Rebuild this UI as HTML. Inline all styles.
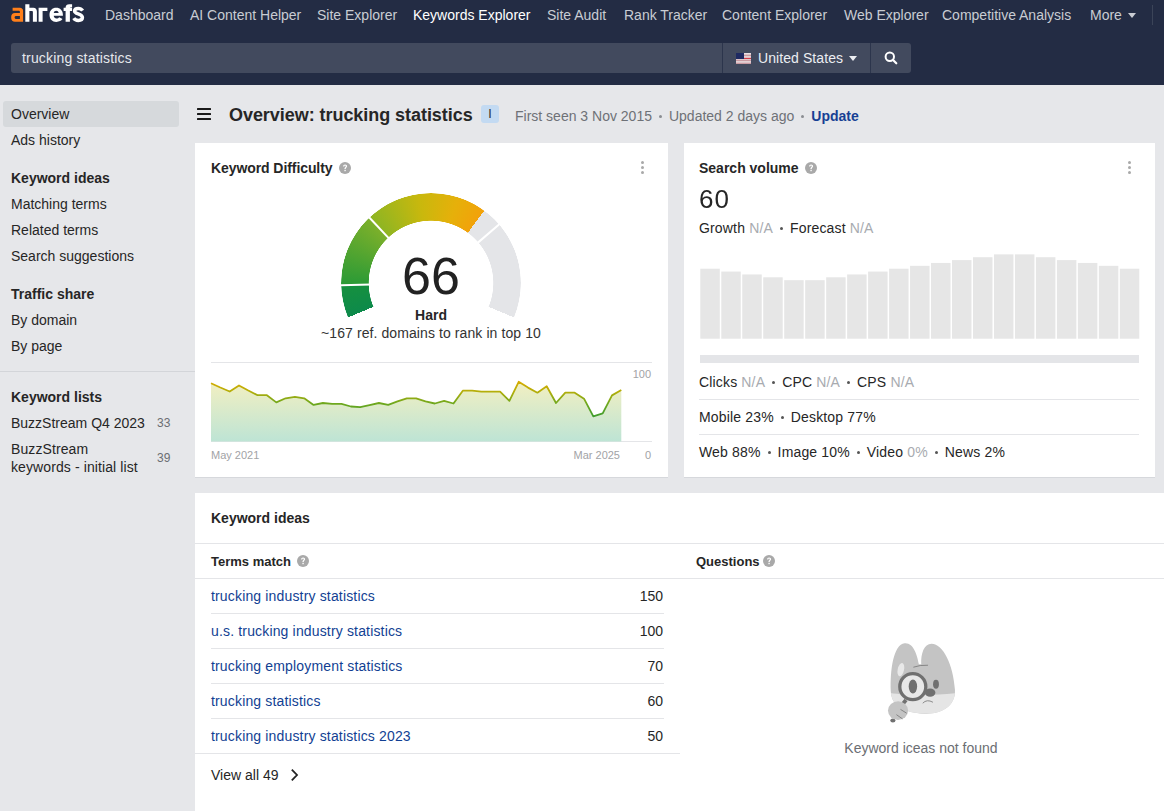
<!DOCTYPE html>
<html><head><meta charset="utf-8">
<style>
*{box-sizing:border-box;margin:0;padding:0}
html,body{width:1164px;height:811px;overflow:hidden;background:#e6e7ea;font-family:"Liberation Sans",sans-serif;color:#262626;font-size:14px}
.a{position:absolute;white-space:nowrap;line-height:20px}
#nav{position:absolute;left:0;top:0;width:1164px;height:85px;background:#232c44}
.ni{position:absolute;top:5px;color:#c9ccd3;font-size:14px;line-height:20px}
.b{font-weight:bold}
.card{position:absolute;background:#fff;box-shadow:0 1px 0 #d6d8dc}
.g{color:#a8abb0}
.dot{display:inline-block;width:3px;height:3px;border-radius:50%;background:#555;vertical-align:middle;margin:0 7px 2px}
.help{position:absolute;width:12px;height:12px}.help svg{display:block}
.kebab{position:absolute;width:4px}
.kebab i{display:block;width:3.4px;height:3.4px;border-radius:50%;background:#a9a9a9;margin-bottom:1.6px}
.lnk{color:#123f93;letter-spacing:0.16px}
.ls{letter-spacing:0.16px}
.hl{position:absolute;height:1px;background:#e4e5e8}
</style></head><body>
<div id="nav">
  <svg style="position:absolute;left:0;top:0" width="90" height="28" viewBox="0 0 90 28">
  <path fill="#ff7f1a" fill-rule="evenodd" d="M12.6,7.7 H20 C21.8,7.7 23.1,9 23.1,10.8 V21.8 H15 C12.6,21.8 11.2,20.3 11.2,18.1 V16.7 C11.2,14.5 12.6,13 15,13 H19.9 V11.7 C19.9,11.1 19.5,10.8 19,10.8 H12.6 Z M15.2,16.2 C14.8,16.4 14.6,16.8 14.6,17.4 C14.6,18.3 15.3,18.9 16.3,18.9 H19.9 V15.9 H16.6 C16,15.9 15.6,16 15.2,16.2 Z"/>
  <path fill="#fff" d="M25.3,4.2 H29.4 V7.7 H33.4 C35.5,7.7 36.9,9.2 36.9,11.4 V21.8 H32.9 V12 C32.9,11.3 32.5,10.9 31.8,10.9 H29.4 V21.8 H25.3 Z"/>
  <path fill="#fff" d="M38.6,7.7 H47.4 V11.1 H42.6 V21.8 H38.6 Z"/>
  <path fill="#fff" fill-rule="evenodd" d="M49.5,14.75 C49.5,10.4 52.3,7.7 56.2,7.7 C60.1,7.7 62.9,10.4 62.9,14.75 V15.8 H53.7 C54,17.5 55,18.5 56.5,18.5 C57.7,18.5 58.6,18 59.2,17.2 L62.5,19.1 C61.3,20.9 59.2,21.9 56.3,21.9 C52.3,21.9 49.5,19.1 49.5,14.75 Z M53.7,13 C54,11.6 54.9,10.8 56.2,10.8 C57.5,10.8 58.4,11.6 58.7,13 Z"/>
  <path fill="#fff" d="M65.6,21.8 V10.9 H63.6 V7.7 H65.6 V7.6 C65.6,5.4 67,4.2 69.3,4.2 H72.1 V7.3 H70.9 C70.3,7.3 69.9,7.6 69.9,8.2 V7.7 H72.1 V10.9 H69.9 V21.8 Z"/>
  <path fill="none" stroke="#fff" stroke-width="3.5" d="M82.6,10.6 C81.6,9.1 80.1,8.4 78.3,8.4 C76,8.4 74.6,9.5 74.6,11 C74.6,14.6 82.4,13.1 82.4,17.6 C82.4,19.5 80.7,20.4 78.3,20.4 C76.3,20.4 74.7,19.6 73.8,18.1"/>
</svg>
  <div class="ni" style="left:105px">Dashboard</div>
  <div class="ni" style="left:190px">AI Content Helper</div>
  <div class="ni" style="left:317px">Site Explorer</div>
  <div class="ni" style="left:413px;color:#fff">Keywords Explorer</div>
  <div class="ni" style="left:547px">Site Audit</div>
  <div class="ni" style="left:624px">Rank Tracker</div>
  <div class="ni" style="left:722px">Content Explorer</div>
  <div class="ni" style="left:844px">Web Explorer</div>
  <div class="ni" style="left:942px">Competitive Analysis</div>
  <div class="ni" style="left:1090px">More</div>
  <div style="position:absolute;left:1128px;top:13px;width:0;height:0;border-left:4px solid transparent;border-right:4px solid transparent;border-top:5px solid #c9ccd3"></div>
  <div style="position:absolute;left:1152px;top:5px;width:1px;height:20px;background:#3b4458"></div>
  <!-- search -->
  <div style="position:absolute;left:11px;top:43px;width:900px;height:30px;background:#424a5e;border-radius:3px"></div>
  <div style="position:absolute;left:722px;top:43px;width:1px;height:30px;background:#2c354c"></div>
  <div style="position:absolute;left:870px;top:43px;width:1px;height:30px;background:#2c354c"></div>
  <div class="a" style="left:22px;top:48px;color:#e6e8ec;letter-spacing:0.17px">trucking statistics</div>
  <!-- flag -->
  <svg style="position:absolute;left:736px;top:53px" width="15" height="11" viewBox="0 0 15 11">
    <rect width="15" height="11" fill="#e9dfe2"/>
    <rect y="1.6" width="15" height="1.6" fill="#c99aa2"/><rect y="4.8" width="15" height="1.2" fill="#d23a47"/><rect y="6.6" width="15" height="1.6" fill="#c99aa2"/><rect y="9.6" width="15" height="1.4" fill="#c99aa2"/>
    <rect width="8" height="6" fill="#1f2a62"/>
  </svg>
  <div class="a" style="left:758px;top:48px;color:#eceef2;letter-spacing:0.08px">United States</div>
  <div style="position:absolute;left:849px;top:56px;width:0;height:0;border-left:4px solid transparent;border-right:4px solid transparent;border-top:5px solid #eceef2"></div>
  <svg style="position:absolute;left:884px;top:51px" width="14" height="14" viewBox="0 0 14 14"><circle cx="5.8" cy="5.8" r="4.2" fill="none" stroke="#fff" stroke-width="2"/><line x1="8.8" y1="8.8" x2="12.3" y2="12.3" stroke="#fff" stroke-width="2.2" stroke-linecap="round"/></svg>
</div>

<!-- sidebar -->
<div style="position:absolute;left:3px;top:101px;width:176px;height:26px;background:#d6d9dc;border-radius:3px"></div>
<div class="a" style="left:11px;top:104px">Overview</div>
<div class="a" style="left:11px;top:130px">Ads history</div>
<div class="a b" style="left:11px;top:168px">Keyword ideas</div>
<div class="a" style="left:11px;top:194px">Matching terms</div>
<div class="a" style="left:11px;top:220px">Related terms</div>
<div class="a" style="left:11px;top:246px">Search suggestions</div>
<div class="a b" style="left:11px;top:284px">Traffic share</div>
<div class="a" style="left:11px;top:310px">By domain</div>
<div class="a" style="left:11px;top:336px">By page</div>
<div style="position:absolute;left:0;top:371px;width:195px;height:1px;background:#d3d5d9"></div>
<div class="a b" style="left:11px;top:387px">Keyword lists</div>
<div class="a" style="left:11px;top:413px">BuzzStream Q4 2023</div>
<div class="a" style="left:157px;top:413px;font-size:12px;color:#6b6e73">33</div>
<div class="a" style="left:11px;top:440px;line-height:18px;letter-spacing:0.1px">BuzzStream<br>keywords - initial list</div>
<div class="a" style="left:157px;top:448px;font-size:12px;color:#6b6e73">39</div>

<!-- header -->
<svg style="position:absolute;left:197px;top:108px" width="14" height="12" viewBox="0 0 14 12"><rect x="0" y="0" width="14" height="2" rx="0.5" fill="#1a1a1a"/><rect x="0" y="5" width="14" height="2" rx="0.5" fill="#1a1a1a"/><rect x="0" y="10" width="14" height="2" rx="0.5" fill="#1a1a1a"/></svg>
<div class="a b" style="left:229px;top:103px;font-size:18px;line-height:24px;letter-spacing:-0.05px">Overview: trucking statistics</div>
<div style="position:absolute;left:481px;top:105px;width:18px;height:18px;background:#c3daf2;border-radius:3px;color:#2a2a2a;font-size:12.5px;line-height:18px;text-align:center">I</div>
<div class="a" style="left:515px;top:106px;color:#6e7177">First seen 3 Nov 2015<span class="dot" style="background:#8a8d92"></span>Updated 2 days ago<span class="dot" style="background:#8a8d92"></span><span class="b" style="color:#173f94">Update</span></div>

<!-- card KD -->
<div class="card" style="left:195px;top:143px;width:473px;height:334px"></div>
<div class="a b" style="left:211px;top:158px;letter-spacing:-0.08px">Keyword Difficulty</div>
<div class="help" style="left:339px;top:162px"><svg width="12" height="12" viewBox="0 0 12 12"><circle cx="6" cy="6" r="6" fill="#a9a9a9"/><path d="M4.1,4.5 C4.1,3.3 4.9,2.5 6.1,2.5 C7.3,2.5 8.1,3.3 8.1,4.3 C8.1,5.5 6.7,5.7 6.7,7 L5.4,7 C5.4,5.3 6.8,5.1 6.8,4.3 C6.8,3.9 6.5,3.6 6.05,3.6 C5.6,3.6 5.3,3.9 5.3,4.5 Z" fill="#fff"/><rect x="5.4" y="7.8" width="1.35" height="1.4" fill="#fff"/></svg></div>
<div class="kebab" style="left:641px;top:161px"><i></i><i></i><i></i></div>

<div id="gauge" style="position:absolute;left:341px;top:193px;width:180px;height:180px;border-radius:50%;
 background:conic-gradient(from 247.5deg,#0d8a4b 0deg,#16903f 21deg,#2a9a36 21deg,#7db02a 69.2deg,#8db523 69.2deg,#c9b80d 105deg,#e6b00a 130deg,#f2a20a 148.8deg,#e4e5e8 148.8deg,#e4e5e8 225deg,transparent 225deg);
 -webkit-mask:radial-gradient(circle at 50% 50%,transparent 62px,#000 62.6px,#000 89.6px,transparent 90.2px);mask:radial-gradient(circle at 50% 50%,transparent 62px,#000 62.6px,#000 89.6px,transparent 90.2px)"></div>
<svg style="position:absolute;left:341px;top:193px" width="180" height="180" viewBox="-90 -90 180 180">
  <g stroke="#fff" stroke-width="2">
    <line x1="-60" y1="0" x2="-92" y2="0" transform="rotate(-1.5)"/>
    <line x1="-60" y1="0" x2="-92" y2="0" transform="rotate(46.7)"/>
    <line x1="-60" y1="0" x2="-92" y2="0" transform="rotate(139.3)"/>
  </g>
</svg>
<div class="a" style="left:381px;top:248px;width:100px;text-align:center;font-size:52px;line-height:56px;color:#222">66</div>
<div class="a b" style="left:381px;top:305px;width:100px;text-align:center;font-size:14px">Hard</div>
<div class="a" style="left:281px;top:323px;width:300px;text-align:center;font-size:14px;color:#333;letter-spacing:0.09px">~167 ref. domains to rank in top 10</div>

<svg style="position:absolute;left:0;top:0" width="1164" height="811">
  <defs>
    <linearGradient id="fillg" x1="0" y1="362" x2="0" y2="442" gradientUnits="userSpaceOnUse">
      <stop offset="0.2" stop-color="#f6f0c0"/><stop offset="1" stop-color="#bde4d5"/>
    </linearGradient>
    <linearGradient id="lineg" x1="0" y1="380" x2="0" y2="418" gradientUnits="userSpaceOnUse">
      <stop offset="0" stop-color="#dcab00"/><stop offset="0.3" stop-color="#b5ae0a"/><stop offset="0.62" stop-color="#6fa81e"/><stop offset="1" stop-color="#3a9c30"/>
    </linearGradient>
  </defs>
  <rect x="211" y="362" width="441" height="1" fill="#e4e5e8"/>
  <rect x="211" y="441" width="441" height="1" fill="#e4e5e8"/>
  <path d="M211.0,441.5 L211.0,383.2 L220.3,387.5 L229.7,391.5 L239.0,385.5 L248.3,390.5 L257.6,395.2 L266.9,395.2 L276.3,402.4 L285.6,398.3 L294.9,396.9 L304.2,398.3 L313.6,404.9 L322.9,403.0 L332.2,403.9 L341.5,403.9 L350.9,406.5 L360.2,407.2 L369.5,405.1 L378.9,403.0 L388.2,404.9 L397.5,401.4 L406.8,398.3 L416.1,398.3 L425.5,401.4 L434.8,403.5 L444.1,400.8 L453.5,403.5 L462.8,390.7 L472.1,390.7 L481.4,391.7 L490.8,391.7 L500.1,391.7 L509.4,400.8 L518.7,381.8 L528.0,387.6 L537.4,392.7 L546.7,386.3 L556.0,403.0 L565.3,392.7 L574.7,392.7 L584.0,398.7 L593.3,416.4 L602.7,413.4 L612.0,395.4 L621.3,390.0 L621.3,441.5 Z" fill="url(#fillg)"/>
  <path d="M211.0,383.2 L220.3,387.5 L229.7,391.5 L239.0,385.5 L248.3,390.5 L257.6,395.2 L266.9,395.2 L276.3,402.4 L285.6,398.3 L294.9,396.9 L304.2,398.3 L313.6,404.9 L322.9,403.0 L332.2,403.9 L341.5,403.9 L350.9,406.5 L360.2,407.2 L369.5,405.1 L378.9,403.0 L388.2,404.9 L397.5,401.4 L406.8,398.3 L416.1,398.3 L425.5,401.4 L434.8,403.5 L444.1,400.8 L453.5,403.5 L462.8,390.7 L472.1,390.7 L481.4,391.7 L490.8,391.7 L500.1,391.7 L509.4,400.8 L518.7,381.8 L528.0,387.6 L537.4,392.7 L546.7,386.3 L556.0,403.0 L565.3,392.7 L574.7,392.7 L584.0,398.7 L593.3,416.4 L602.7,413.4 L612.0,395.4 L621.3,390.0" fill="none" stroke="url(#lineg)" stroke-width="1.8" stroke-linejoin="round"/>
</svg>
<div class="a" style="left:600px;top:364px;width:51px;text-align:right;font-size:11px;color:#a2a3a6">100</div>
<div class="a" style="left:600px;top:445px;width:51px;text-align:right;font-size:11px;color:#a2a3a6">0</div>
<div class="a" style="left:211px;top:445px;font-size:11px;color:#a2a3a6">May 2021</div>
<div class="a" style="left:520px;top:445px;width:100px;text-align:right;font-size:11px;color:#a2a3a6">Mar 2025</div>

<!-- card SV -->
<div class="card" style="left:684px;top:143px;width:471px;height:334px"></div>
<div class="a b" style="left:699px;top:158px">Search volume</div>
<div class="help" style="left:805px;top:162px"><svg width="12" height="12" viewBox="0 0 12 12"><circle cx="6" cy="6" r="6" fill="#a9a9a9"/><path d="M4.1,4.5 C4.1,3.3 4.9,2.5 6.1,2.5 C7.3,2.5 8.1,3.3 8.1,4.3 C8.1,5.5 6.7,5.7 6.7,7 L5.4,7 C5.4,5.3 6.8,5.1 6.8,4.3 C6.8,3.9 6.5,3.6 6.05,3.6 C5.6,3.6 5.3,3.9 5.3,4.5 Z" fill="#fff"/><rect x="5.4" y="7.8" width="1.35" height="1.4" fill="#fff"/></svg></div>
<div class="kebab" style="left:1128px;top:161px"><i></i><i></i><i></i></div>
<div class="a" style="left:699px;top:183px;font-size:25px;line-height:32px;letter-spacing:0.9px;transform:scaleX(1.04);transform-origin:0 0">60</div>
<div class="a ls" style="left:699px;top:218px">Growth <span class="g">N/A</span><span class="dot"></span>Forecast <span class="g">N/A</span></div>
<svg style="position:absolute;left:0;top:0" width="1164" height="811">
  <g fill="#e6e6e6"><rect x="700.30" y="268.70" width="19.48" height="70.00"/><rect x="721.28" y="271.57" width="19.48" height="67.13"/><rect x="742.25" y="274.44" width="19.48" height="64.26"/><rect x="763.23" y="277.31" width="19.48" height="61.39"/><rect x="784.20" y="280.18" width="19.48" height="58.52"/><rect x="805.18" y="280.18" width="19.48" height="58.52"/><rect x="826.16" y="277.31" width="19.48" height="61.39"/><rect x="847.13" y="274.44" width="19.48" height="64.26"/><rect x="868.11" y="271.57" width="19.48" height="67.13"/><rect x="889.09" y="268.70" width="19.48" height="70.00"/><rect x="910.06" y="265.83" width="19.48" height="72.87"/><rect x="931.04" y="262.96" width="19.48" height="75.74"/><rect x="952.01" y="260.09" width="19.48" height="78.61"/><rect x="972.99" y="257.22" width="19.48" height="81.48"/><rect x="993.97" y="254.35" width="19.48" height="84.35"/><rect x="1014.94" y="254.35" width="19.48" height="84.35"/><rect x="1035.92" y="257.22" width="19.48" height="81.48"/><rect x="1056.90" y="260.09" width="19.48" height="78.61"/><rect x="1077.87" y="262.96" width="19.48" height="75.74"/><rect x="1098.85" y="265.83" width="19.48" height="72.87"/><rect x="1119.82" y="268.70" width="19.48" height="70.00"/></g>
  <rect x="700" y="355" width="439" height="8" fill="#e4e5e8"/>
  <rect x="699" y="399" width="440" height="1" fill="#e4e5e8"/>
  <rect x="699" y="434" width="440" height="1" fill="#e4e5e8"/>
</svg>
<div class="a ls" style="left:699px;top:372px">Clicks <span class="g">N/A</span><span class="dot"></span>CPC <span class="g">N/A</span><span class="dot"></span>CPS <span class="g">N/A</span></div>
<div class="a ls" style="left:699px;top:407px">Mobile 23%<span class="dot"></span>Desktop 77%</div>
<div class="a ls" style="left:699px;top:442px">Web 88%<span class="dot"></span>Image 10%<span class="dot"></span>Video <span class="g">0%</span><span class="dot"></span>News 2%</div>

<!-- card keyword ideas -->
<div class="card" style="left:195px;top:493px;width:980px;height:330px"></div>
<div class="a b" style="left:211px;top:508px">Keyword ideas</div>
<div class="hl" style="left:195px;top:543px;width:969px"></div>
<div class="a b" style="left:211px;top:552px;font-size:13px">Terms match</div>
<div class="help" style="left:297px;top:555px"><svg width="12" height="12" viewBox="0 0 12 12"><circle cx="6" cy="6" r="6" fill="#a9a9a9"/><path d="M4.1,4.5 C4.1,3.3 4.9,2.5 6.1,2.5 C7.3,2.5 8.1,3.3 8.1,4.3 C8.1,5.5 6.7,5.7 6.7,7 L5.4,7 C5.4,5.3 6.8,5.1 6.8,4.3 C6.8,3.9 6.5,3.6 6.05,3.6 C5.6,3.6 5.3,3.9 5.3,4.5 Z" fill="#fff"/><rect x="5.4" y="7.8" width="1.35" height="1.4" fill="#fff"/></svg></div>
<div class="a b" style="left:696px;top:552px;font-size:13px">Questions</div>
<div class="help" style="left:763px;top:555px"><svg width="12" height="12" viewBox="0 0 12 12"><circle cx="6" cy="6" r="6" fill="#a9a9a9"/><path d="M4.1,4.5 C4.1,3.3 4.9,2.5 6.1,2.5 C7.3,2.5 8.1,3.3 8.1,4.3 C8.1,5.5 6.7,5.7 6.7,7 L5.4,7 C5.4,5.3 6.8,5.1 6.8,4.3 C6.8,3.9 6.5,3.6 6.05,3.6 C5.6,3.6 5.3,3.9 5.3,4.5 Z" fill="#fff"/><rect x="5.4" y="7.8" width="1.35" height="1.4" fill="#fff"/></svg></div>
<div class="hl" style="left:195px;top:578px;width:969px"></div>
<div class="a lnk" style="left:211px;top:586px">trucking industry statistics</div><div class="a" style="left:563px;top:586px;width:100px;text-align:right">150</div>
<div class="hl" style="left:211px;top:613px;width:453px"></div>
<div class="a lnk" style="left:211px;top:621px">u.s. trucking industry statistics</div><div class="a" style="left:563px;top:621px;width:100px;text-align:right">100</div>
<div class="hl" style="left:211px;top:648px;width:453px"></div>
<div class="a lnk" style="left:211px;top:656px">trucking employment statistics</div><div class="a" style="left:563px;top:656px;width:100px;text-align:right">70</div>
<div class="hl" style="left:211px;top:683px;width:453px"></div>
<div class="a lnk" style="left:211px;top:691px">trucking statistics</div><div class="a" style="left:563px;top:691px;width:100px;text-align:right">60</div>
<div class="hl" style="left:211px;top:718px;width:453px"></div>
<div class="a lnk" style="left:211px;top:726px">trucking industry statistics 2023</div><div class="a" style="left:563px;top:726px;width:100px;text-align:right">50</div>
<div class="hl" style="left:195px;top:753px;width:485px"></div>
<div class="a" style="left:211px;top:765px">View all 49</div>
<svg style="position:absolute;left:290px;top:768px" width="10" height="14" viewBox="0 0 10 14"><path d="M1.8 1.6 L7 7 L1.8 12.4" fill="none" stroke="#222" stroke-width="1.8"/></svg>

<!-- mascot -->
<svg style="position:absolute;left:880px;top:635px" width="80" height="95" viewBox="0 0 683 811">
  <defs><clipPath id="hc"><path id="sil" d="M92,480 C85,300 115,80 210,70 C285,62 318,170 332,250 L352,250 C348,160 375,75 440,75 C540,80 625,250 640,470 C646,610 520,672 400,672 C250,672 96,625 92,480 Z"/></clipPath></defs>
  <path d="M92,480 C85,300 115,80 210,70 C285,62 318,170 332,250 L352,250 C348,160 375,75 440,75 C540,80 625,250 640,470 C646,610 520,672 400,672 C250,672 96,625 92,480 Z" fill="#c4c4c4"/>
  <path clip-path="url(#hc)" d="M60,490 C200,515 480,520 700,490 L700,800 L60,800 Z" fill="#e5e5e5"/>
  <ellipse cx="178" cy="295" rx="27" ry="58" transform="rotate(12 178 295)" fill="#e8e8e8"/>
  <path d="M285,275 Q340,255 410,258" stroke="#777" stroke-width="7" fill="none"/>
  <ellipse cx="428" cy="492" rx="45" ry="36" fill="#707070"/>
  <circle cx="280" cy="441" r="111" fill="#e8e8e8" stroke="#707070" stroke-width="28"/>
  <ellipse cx="281" cy="440" rx="36" ry="60" fill="#707070"/>
  <ellipse cx="478" cy="421" rx="25" ry="38" fill="#707070"/>
  <path d="M365,582 Q400,545 452,574" stroke="#777" stroke-width="7" fill="none"/>
  <line x1="222" y1="555" x2="185" y2="600" stroke="#707070" stroke-width="32"/>
  <ellipse cx="110" cy="730" rx="22" ry="18" fill="#707070"/>
  <ellipse cx="154" cy="645" rx="86" ry="80" fill="#c4c4c4"/>
  <line x1="175" y1="635" x2="228" y2="668" stroke="#777" stroke-width="7"/>
  <line x1="140" y1="680" x2="192" y2="716" stroke="#777" stroke-width="7"/>
</svg>
<div class="a" style="left:771px;top:738px;width:300px;text-align:center;color:#6b6e73">Keyword iceas not found</div>
</body></html>
